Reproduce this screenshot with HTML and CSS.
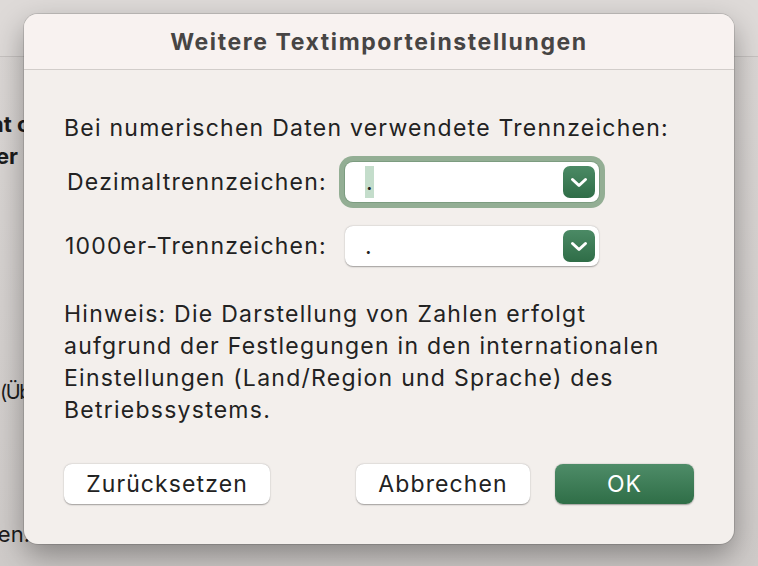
FILE: index.html
```html
<!DOCTYPE html>
<html lang="de">
<head>
    <meta charset="UTF-8">
    <meta name="viewport" content="width=device-width, initial-scale=1.0">
    <title>Weitere Textimporteinstellungen</title>
    <link rel="stylesheet" href="styles.css">
</head>
<body>

<div class="backdrop">
    <div class="backdrop-toolbar"></div>
    <div class="backdrop-pane">
        <div class="bg-line bg-bold bg-first"><span>Element c</span></div>
        <div class="bg-line bg-bold bg-second"><span>der</span></div>
        <div class="bg-line bg-third"><span>(Über</span></div>
        <div class="bg-line bg-last"><span>Trennen:</span></div>
    </div>
</div>

<div class="dialog">
    <div class="dialog-title">Weitere Textimporteinstellungen</div>
    <div class="dialog-body">
        <p class="intro">Bei numerischen Daten verwendete Trennzeichen:</p>

        <div class="form-grid">
            <label class="field-label">Dezimaltrennzeichen:</label>
            <div class="select focused">
                <span class="select-value"><span class="caret-sel">.</span></span>
                <span class="select-arrow">
                    <svg width="32" height="32" viewBox="0 0 32 32"><path d="M9.5 13.5 L16 19.5 L22.5 13.5" fill="none" stroke="#fff" stroke-width="3" stroke-linecap="round" stroke-linejoin="round"/></svg>
                </span>
            </div>

            <label class="field-label">1000er-Trennzeichen:</label>
            <div class="select">
                <span class="select-value">.</span>
                <span class="select-arrow">
                    <svg width="32" height="32" viewBox="0 0 32 32"><path d="M9.5 13.5 L16 19.5 L22.5 13.5" fill="none" stroke="#fff" stroke-width="3" stroke-linecap="round" stroke-linejoin="round"/></svg>
                </span>
            </div>
        </div>

        <p class="hint">Hinweis: Die Darstellung von Zahlen erfolgt aufgrund der Festlegungen in den internationalen Einstellungen (Land/Region und Sprache) des Betriebssystems.</p>

        <div class="actions">
            <button class="btn btn-reset">Zurücksetzen</button>
            <div class="actions-right">
                <button class="btn btn-cancel">Abbrechen</button>
                <button class="btn btn-primary">OK</button>
            </div>
        </div>
    </div>
</div>

</body>
</html>
```

FILE: styles.css
```css
body {
    margin: 0;
    width: 758px;
    height: 566px;
    overflow: hidden;
    position: relative;
    font-family: Inter, "Liberation Sans", sans-serif;
    color: #222;
    background: linear-gradient(to bottom, #dcd8d6, #cfcbc9);
}
.backdrop {
    height: 100%;
}
.backdrop-toolbar {
    height: 56px;
    background-color: #dedad8;
    border-bottom: 1px solid #c6c2c0;
}
.backdrop-pane {
    width: 30px;
    font-size: 22px;
    color: #1c1c1c;
}
.bg-line {
    display: flex;
    justify-content: flex-end;
    white-space: nowrap;
    overflow: hidden;
    height: 32px;
    line-height: 32px;
}
.bg-bold {
    font-weight: 700;
}
.bg-first {
    margin-top: 51px;
}
.bg-second {
    padding-right: 12px;
}
.bg-third {
    justify-content: flex-start;
    font-size: 20px;
    letter-spacing: -1.5px;
    margin-top: 204px;
}
.bg-last {
    margin-top: 110px;
}
.dialog {
    position: absolute;
    left: 24px;
    top: 14px;
    width: 710px;
    height: 530px;
    border-radius: 14px;
    background-color: #f3efec;
    box-shadow: 0 0 0 1px rgba(0, 0, 0, 0.12), 0 12px 30px rgba(0, 0, 0, 0.35);
    overflow: hidden;
}
.dialog-title {
    height: 55px;
    display: flex;
    align-items: center;
    justify-content: center;
    background-color: #f8f2f0;
    border-bottom: 1px solid #d2cdca;
    font-size: 23px;
    font-weight: 700;
    letter-spacing: 1.6px;
    color: #474544;
}
.dialog-body {
    padding: 43px 40px 0 40px;
    font-size: 23px;
    letter-spacing: 1.25px;
}
.intro {
    margin: 0;
    line-height: 30px;
}
.form-grid {
    display: grid;
    grid-template-columns: 263px 254px;
    column-gap: 18px;
    row-gap: 24px;
    align-items: center;
    margin-top: 19px;
}
.field-label {
    text-align: right;
}
.select {
    height: 40px;
    display: flex;
    align-items: center;
    justify-content: space-between;
    background-color: #fff;
    border-radius: 8px;
    box-shadow: 0 0.5px 1.5px rgba(0, 0, 0, 0.35);
    padding: 0 4px 0 20px;
}
.select.focused {
    box-shadow: 0 0 0 1px #7c9c80, 0 0 0 6px #93ae94;
}
.select-value {
    display: flex;
    align-items: center;
}
.caret-sel {
    background-color: #c4ddcb;
    line-height: 32px;
    padding: 0 1px;
    letter-spacing: 0;
}
.select-arrow {
    width: 32px;
    height: 32px;
    border-radius: 7px;
    background: linear-gradient(to bottom, #4b8a65, #2f6d47);
}
.select-arrow svg {
    display: block;
}
.hint {
    max-width: 610px;
    margin: 32px 0 0 0;
    line-height: 32px;
}
.actions {
    display: flex;
    justify-content: space-between;
    margin-top: 38px;
}
.actions-right {
    display: flex;
    gap: 25px;
}
.btn {
    height: 40px;
    padding: 0;
    font-family: inherit;
    font-size: 23px;
    letter-spacing: 1.1px;
    color: #222;
    background-color: #fff;
    border: none;
    border-radius: 8px;
    box-shadow: 0 0.5px 1.5px rgba(0, 0, 0, 0.35);
}
.btn-reset {
    width: 206px;
}
.btn-cancel {
    width: 174px;
}
.btn-primary {
    width: 139px;
    color: #fff;
    background: linear-gradient(to bottom, #4e8c68, #2f6e47);
}
```
